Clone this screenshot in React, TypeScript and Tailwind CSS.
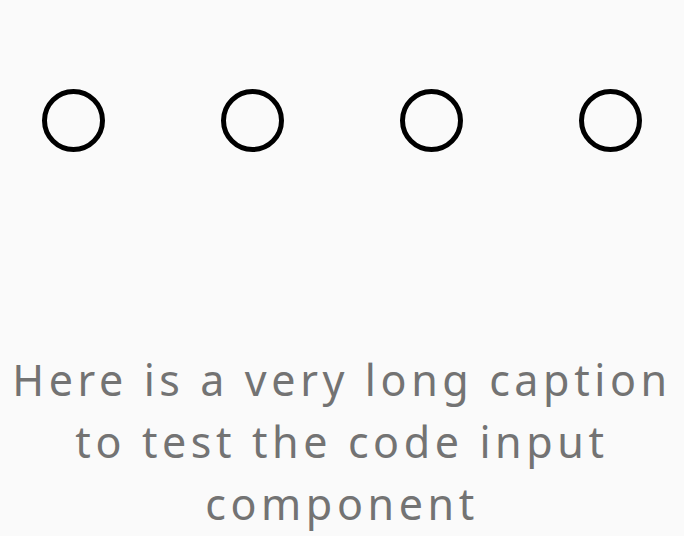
export default function App() {
  return (
    <div className="w-[684px] h-[536px] bg-[#fafafa] overflow-hidden flex flex-col">
      <div className="flex justify-between px-[42px] pt-[89px]">
        {[0, 1, 2, 3].map((i) => (
          <div key={i} className="w-[63px] h-[63px] rounded-full border-[5px] border-black" />
        ))}
      </div>
      <div
        className="mt-[197px] text-center text-[43px] leading-[62px] tracking-[4.6px] text-[#737373]"
        style={{ fontFamily: '"Noto Sans", sans-serif' }}
      >
        Here is a very long caption to test the code input component
      </div>
    </div>
  );
}
